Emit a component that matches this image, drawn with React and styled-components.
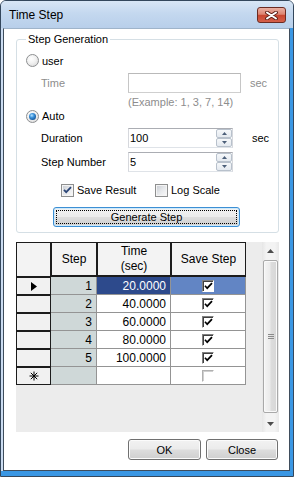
import React from 'react';
import styled, { createGlobalStyle } from 'styled-components';

const GlobalStyle = createGlobalStyle`
  html, body { margin: 0; padding: 0; background: #fff; }
  body { font-family: "Liberation Sans", Arial, sans-serif; font-size: 11px; color: #000; }
  * { box-sizing: border-box; }
`;

const Window = styled.div`
  width: 294px;
  height: 477px;
  display: flex;
  flex-direction: column;
  border: 1px solid #34475c;
  border-radius: 6px 6px 0 0;
  background: #c6d9f0;
  overflow: hidden;
`;

const TitleBar = styled.div`
  height: 27px;
  flex: none;
  display: flex;
  align-items: center;
  justify-content: space-between;
  padding: 1px 7px 0 8px;
  background: linear-gradient(#d8e6f5, #c4d8ef 45%, #b8cfea);
`;

const Title = styled.span`
  font-size: 12px;
  color: #000;
`;

const CloseBox = styled.div`
  width: 29px;
  height: 16px;
  border: 1px solid #6b2b22;
  border-radius: 3px;
  background: linear-gradient(#eab0a2 0%, #dd8471 45%, #c9462f 52%, #d5604a 100%);
  display: flex;
  align-items: center;
  justify-content: center;
`;

const Frame = styled.div`
  flex: 1;
  display: flex;
  padding: 0 3px 5px 2px;
  background: #cbdcf1;
  box-shadow: inset -3px -5px 0 #3a97e4;
`;

const Client = styled.div`
  flex: 1;
  display: flex;
  flex-direction: column;
  background: #fff;
  border: 1px solid #3f4d5c;
  border-top-color: #9fb4ca;
  padding: 10px 10px 0 12px;
`;

const GroupBox = styled.div`
  position: relative;
  height: 194px;
  border: 1px solid #d5dfe5;
  border-radius: 3px;
  padding: 12px 0 0 9px;
  display: flex;
  flex-direction: column;
`;

const GroupLegend = styled.span`
  position: absolute;
  top: -7px;
  left: 9px;
  padding: 0 2px;
  background: #fff;
  line-height: 13px;
`;

const Row = styled.div`
  display: flex;
  align-items: center;
  height: ${p => p.$h}px;
  margin-top: ${p => p.$mt || 0}px;
  padding-left: ${p => p.$indent || 0}px;
`;

const Label = styled.span`
  width: ${p => p.$w || 87}px;
  flex: none;
  color: ${p => (p.$disabled ? '#8d8d8d' : '#000')};
  white-space: nowrap;
`;

const Unit = styled.span`
  margin-left: ${p => p.$ml}px;
  color: ${p => (p.$disabled ? '#8d8d8d' : '#000')};
`;

const Hint = styled.span`
  color: #8d8d8d;
  white-space: nowrap;
`;

const RadioItem = styled.label`
  display: flex;
  align-items: center;
  gap: 3px;
`;

const RadioCircle = styled.span`
  width: 13px;
  height: 13px;
  flex: none;
  border-radius: 50%;
  border: 1px solid #8d8f91;
  background: radial-gradient(circle at 40% 35%, #ffffff 0%, #f1f1f1 45%, #d3d3d3 100%);
  display: flex;
  align-items: center;
  justify-content: center;
  &::after {
    content: '';
    display: ${p => (p.$checked ? 'block' : 'none')};
    width: 7px;
    height: 7px;
    border-radius: 50%;
    background: radial-gradient(circle at 40% 35%, #b5e3ff 0%, #3d93db 35%, #15579a 75%, #0b3768 100%);
  }
`;

const CheckItem = styled.label`
  display: flex;
  align-items: center;
  gap: 3px;
  width: ${p => (p.$w ? `${p.$w}px` : 'auto')};
`;

const CheckSquare = styled.span`
  width: 13px;
  height: 13px;
  flex: none;
  border: 1px solid #8e8f8f;
  background: #f4f4f4;
  padding: 1px;
  display: flex;
`;

const CheckInner = styled.span`
  flex: 1;
  display: flex;
  align-items: center;
  justify-content: center;
  background: linear-gradient(135deg, #cbcfd5 0%, #e6e8eb 50%, #f7f7f7 100%);
`;

const TextBox = styled.div`
  width: ${p => p.$w}px;
  height: 20px;
  flex: none;
  display: flex;
  align-items: center;
  background: #fff;
  border: 1px solid ${p => (p.$disabled ? '#b9b9b9' : '#abadb3')};
  border-bottom-color: ${p => (p.$disabled ? '#cfcfcf' : '#dfe3e8')};
  border-left-color: ${p => (p.$disabled ? '#c6c6c6' : '#d6d8dd')};
  border-right-color: ${p => (p.$disabled ? '#c6c6c6' : '#d6d8dd')};
  padding-left: 1px;
`;

const BoxText = styled.span`
  flex: 1;
`;

const Spin = styled.div`
  width: 16px;
  height: 18px;
  display: flex;
  flex-direction: column;
`;

const SpinHalf = styled.div`
  flex: 1;
  display: flex;
  align-items: center;
  justify-content: center;
  border: 1px solid #b8c1cc;
  border-radius: 2px;
  background: linear-gradient(#f6f8fa, #e4e9ef);
`;

const PushButton = styled.div`
  width: ${p => p.$w}px;
  height: ${p => p.$h || 21}px;
  flex: none;
  position: relative;
  display: flex;
  align-items: center;
  justify-content: center;
  border: 1px solid ${p => (p.$default ? '#3c8fd4' : '#707070')};
  border-radius: 3px;
  box-shadow: inset 0 0 0 1px ${p => (p.$default ? '#cde9fb' : '#fbfbfb')};
  background: linear-gradient(#f2f2f2 0%, #ebebeb 48%, #dddddd 52%, #cfcfcf 100%);
  color: #000;
`;

const FocusRect = styled.span`
  position: absolute;
  inset: 2px;
  border: 1px dotted #000;
  pointer-events: none;
`;

const Grid = styled.div`
  display: flex;
  height: 190px;
  margin-top: 9px;
  background: #ececec;
  font-size: 12px;
`;

const Table = styled.div`
  display: grid;
  grid-template-columns: 35px 46px 74px 75px;
  grid-template-rows: 35px;
  grid-auto-rows: 18px;
  align-self: flex-start;
`;

const HeaderCell = styled.div`
  display: flex;
  align-items: center;
  justify-content: center;
  text-align: center;
  line-height: 15px;
  background: #f3f3f3;
  border: 1px solid #1c1c1c;
  border-bottom-width: ${p => (p.$corner ? 1 : 2)}px;
`;

const RowHeader = styled.div`
  display: flex;
  align-items: center;
  justify-content: center;
  background: #f1f1f1;
  border: 1px solid #1c1c1c;
`;

const Cell = styled.div`
  display: flex;
  align-items: center;
  justify-content: ${p => (p.$center ? 'center' : 'flex-end')};
  padding-right: ${p => (p.$center ? 0 : 4)}px;
  background: ${p => p.$bg || '#fff'};
  color: ${p => p.$fg || '#000'};
  border-right: 1px solid #949494;
  border-bottom: 1px solid #949494;
`;

const GridCheck = styled.span`
  width: 12px;
  height: 12px;
  display: flex;
  align-items: center;
  justify-content: center;
  background: #fff;
  border-top: 1px solid ${p => (p.$disabled ? '#b0b0b0' : '#808080')};
  border-left: 1px solid ${p => (p.$disabled ? '#b0b0b0' : '#808080')};
  border-bottom: 1px solid #fff;
  border-right: 1px solid #fff;
  box-shadow: inset 1px 1px 0 ${p => (p.$disabled ? '#d0d0d0' : '#404040')};
`;

const ScrollBar = styled.div`
  width: 17px;
  margin-left: auto;
  display: flex;
  flex-direction: column;
  background: linear-gradient(to right, #e6e6e6 0%, #f3f3f3 25%, #f3f3f3 75%, #e9e9e9 100%);
`;

const ScrollArrow = styled.div`
  height: 17px;
  flex: none;
  display: flex;
  align-items: center;
  justify-content: center;
`;

const Thumb = styled.div`
  flex: 1;
  margin: 1px 1px 2px;
  border: 1px solid #a9a9a9;
  border-radius: 2px;
  background: linear-gradient(to right, #f5f5f5 0%, #ebebeb 45%, #dcdcdc 55%, #d7d7d7 100%);
  box-shadow: inset 0 0 0 1px #f9f9f9;
  display: flex;
  align-items: center;
  justify-content: center;
`;

const ButtonBar = styled.div`
  display: flex;
  justify-content: flex-end;
  gap: 5px;
  margin-top: 7px;
  margin-right: 1px;
`;

const rows = [
  { step: 1, time: '20.0000', selected: true },
  { step: 2, time: '40.0000' },
  { step: 3, time: '60.0000' },
  { step: 4, time: '80.0000' },
  { step: 5, time: '100.0000' },
];

const Tick = ({ color = '#000', w = 1.7 }) => (
  <svg width="9" height="8" viewBox="0 0 9 8">
    <polyline points="1,3.8 3.2,6.2 8,1.2" fill="none" stroke={color} strokeWidth={w} />
  </svg>
);

const UpTri = () => (
  <svg width="5" height="3" viewBox="0 0 5 3"><polygon points="0,3 2.5,0 5,3" fill="#4c5f79" /></svg>
);
const DownTri = () => (
  <svg width="5" height="3" viewBox="0 0 5 3"><polygon points="0,0 2.5,3 5,0" fill="#4c5f79" /></svg>
);

const SpinBox = ({ value }) => (
  <TextBox $w={105}>
    <BoxText>{value}</BoxText>
    <Spin>
      <SpinHalf><UpTri /></SpinHalf>
      <SpinHalf><DownTri /></SpinHalf>
    </Spin>
  </TextBox>
);

export default function App() {
  return (
    <>
      <GlobalStyle />
      <Window>
        <TitleBar>
          <Title>Time Step</Title>
          <CloseBox>
            <svg width="13" height="9" viewBox="0 0 13 9">
              <path d="M2 1.5 L11 7.5 M11 1.5 L2 7.5" stroke="#5e2219" strokeWidth="3.8" strokeLinecap="round" />
              <path d="M2 1.5 L11 7.5 M11 1.5 L2 7.5" stroke="#fff" strokeWidth="2" strokeLinecap="round" />
            </svg>
          </CloseBox>
        </TitleBar>
        <Frame>
          <Client>
            <GroupBox>
              <GroupLegend>Step Generation</GroupLegend>
              <Row $h={17}>
                <RadioItem><RadioCircle />user</RadioItem>
              </Row>
              <Row $h={20} $mt={4} $indent={15}>
                <Label $disabled>Time</Label>
                <TextBox $w={113} $disabled />
                <Unit $ml={9} $disabled>sec</Unit>
              </Row>
              <Row $h={14} $mt={2} $indent={102}>
                <Hint>(Example: 1, 3, 7, 14)</Hint>
              </Row>
              <Row $h={14}>
                <RadioItem><RadioCircle $checked />Auto</RadioItem>
              </Row>
              <Row $h={20} $mt={5} $indent={15}>
                <Label>Duration</Label>
                <SpinBox value="100" />
                <Unit $ml={19}>sec</Unit>
              </Row>
              <Row $h={20} $mt={4} $indent={15}>
                <Label>Step Number</Label>
                <SpinBox value="5" />
              </Row>
              <Row $h={14} $mt={11} $indent={35}>
                <CheckItem $w={94}>
                  <CheckSquare><CheckInner><Tick color="#2c4677" w={1.8} /></CheckInner></CheckSquare>
                  Save Result
                </CheckItem>
                <CheckItem>
                  <CheckSquare><CheckInner /></CheckSquare>
                  Log Scale
                </CheckItem>
              </Row>
              <Row $h={20} $mt={10} $indent={27}>
                <PushButton $w={187} $h={20} $default>
                  Generate Step
                  <FocusRect />
                </PushButton>
              </Row>
            </GroupBox>

            <Grid>
              <Table>
                <HeaderCell $corner />
                <HeaderCell>Step</HeaderCell>
                <HeaderCell>Time<br />(sec)</HeaderCell>
                <HeaderCell>Save Step</HeaderCell>
                {rows.map(r => (
                  <React.Fragment key={r.step}>
                    <RowHeader>
                      {r.selected && (
                        <svg width="6" height="9" viewBox="0 0 6 9"><polygon points="0,0 6,4.5 0,9" fill="#000" /></svg>
                      )}
                    </RowHeader>
                    <Cell $bg="#cfd8d8">{r.step}</Cell>
                    <Cell $bg={r.selected ? '#2d4a8c' : '#fff'} $fg={r.selected ? '#fff' : '#000'}>{r.time}</Cell>
                    <Cell $center $bg={r.selected ? '#6285c4' : '#fff'}>
                      <GridCheck><Tick /></GridCheck>
                    </Cell>
                  </React.Fragment>
                ))}
                <RowHeader>
                  <svg width="10" height="10" viewBox="0 0 10 10">
                    <path d="M5 0.5 V9.5 M0.5 5 H9.5 M1.8 1.8 L8.2 8.2 M8.2 1.8 L1.8 8.2" stroke="#000" strokeWidth="1" />
                  </svg>
                </RowHeader>
                <Cell $bg="#cfd8d8" />
                <Cell />
                <Cell $center>
                  <GridCheck $disabled />
                </Cell>
              </Table>
              <ScrollBar>
                <ScrollArrow>
                  <svg width="7" height="4" viewBox="0 0 7 4"><polygon points="0,4 3.5,0 7,4" fill="#4d4d4d" /></svg>
                </ScrollArrow>
                <Thumb>
                  <svg width="6" height="5" viewBox="0 0 6 5">
                    <path d="M0 0.5 H6 M0 2.5 H6 M0 4.5 H6" stroke="#8a8a8a" strokeWidth="1" />
                  </svg>
                </Thumb>
                <ScrollArrow>
                  <svg width="7" height="4" viewBox="0 0 7 4"><polygon points="0,0 3.5,4 7,0" fill="#4d4d4d" /></svg>
                </ScrollArrow>
              </ScrollBar>
            </Grid>

            <ButtonBar>
              <PushButton $w={73}>OK</PushButton>
              <PushButton $w={72}>Close</PushButton>
            </ButtonBar>
          </Client>
        </Frame>
      </Window>
    </>
  );
}
